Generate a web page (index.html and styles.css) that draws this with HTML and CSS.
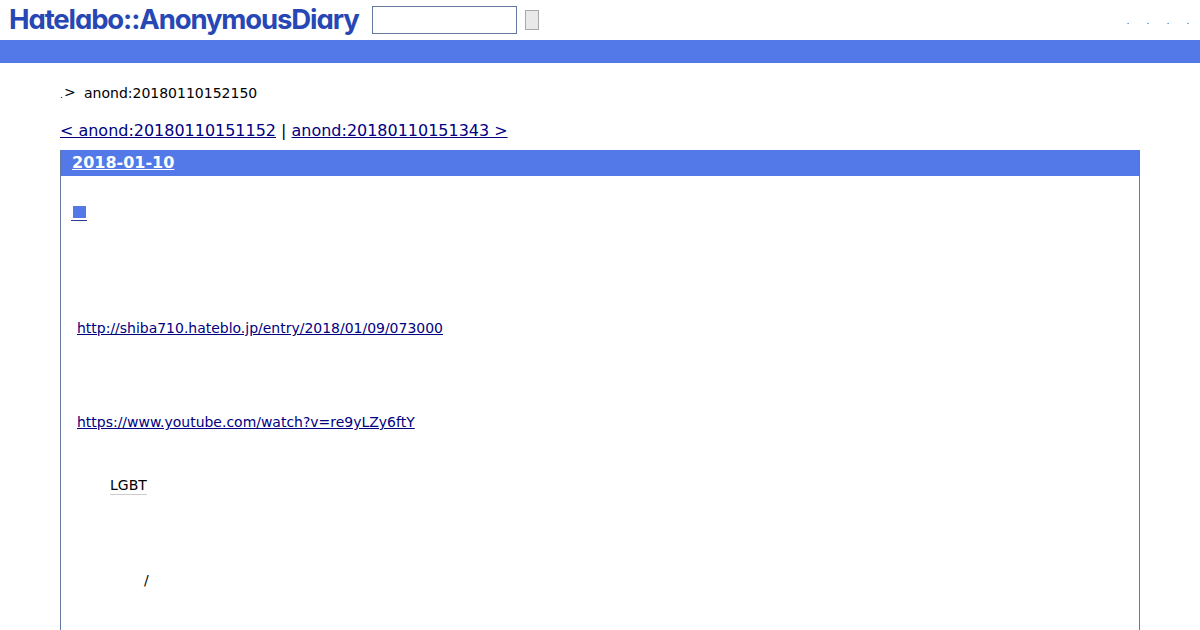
FILE: index.html
```html
<!DOCTYPE html>
<html lang="ja">
<head>
<meta charset="utf-8">
<title>anond:20180110152150</title>
<link rel="stylesheet" href="styles.css">
</head>
<body>
<header class="top">
  <a class="logo">Hatelabo::AnonymousDiary</a>
  <form class="search">
    <input class="search-input" type="text">
    <button class="search-btn" type="button"></button>
  </form>
  <nav class="top-links"><span>.</span><span>.</span><span>.</span><span>.</span></nav>
</header>
<div class="bar"></div>
<main class="main">
  <p class="crumb"><span class="dot">.</span><span class="gt">&gt;</span><span>anond:20180110152150</span></p>
  <p class="pager"><a href="#">&lt; anond:20180110151152</a> | <a href="#">anond:20180110151343 &gt;</a></p>
  <section class="day">
    <h2 class="day-title"><a href="#">2018-01-10</a></h2>
    <div class="body">
      <h3 class="section-head"><a href="#"><span class="square"></span></a></h3>
      <p class="link-a"><a href="#">http://shiba710.hateblo.jp/entry/2018/01/09/073000</a></p>
      <p class="link-b"><a href="#">https://www.youtube.com/watch?v=re9yLZy6ftY</a></p>
      <p class="lgbt"><span class="kw">LGBT</span></p>
      <p class="slash">/</p>
    </div>
  </section>
</main>
</body>
</html>
```
FILE: styles.css
```css
html, body { margin: 0; padding: 0; height: 630px; overflow: hidden; background: #fff; }
body { font-family: "DejaVu Sans", sans-serif; color: #000; font-size: 14px; }
a { color: #000080; }
.top { height: 40px; display: flex; align-items: flex-start; }
.logo {
  font-family: "Inter", sans-serif; font-weight: 650; font-size: 27.5px; line-height: 39px;
  font-feature-settings: "cv11" 1;
  color: #2748b4; margin-left: 9px; width: 349px; white-space: nowrap; letter-spacing: -1.12px;
}
.search { display: flex; align-items: center; margin: 6px 0 0 14px; }
.search-input {
  width: 145px; height: 28px; box-sizing: border-box; border: 1px solid #64799f;
  background: #fff; padding: 0; margin: 0; border-radius: 0;
}
.search-btn {
  width: 14px; height: 20px; box-sizing: border-box; margin: 0 0 0 8px; padding: 0;
  background: #e9e9e9; border: 1px solid #a9a9a9; border-radius: 0;
}
.top-links { margin-left: auto; margin-right: 10px; display: flex; gap: 16px; font-size: 8px; line-height: 10px; padding-top: 17px; color: #333; }
.top-links span { width: 4px; text-align: center; }
.bar { height: 23px; background: #5279e7; }
.main { padding: 0 60px; }
.crumb { margin: 21px 0 0; height: 18px; line-height: 18px; font-size: 14px; display: flex; }
.dot { font-size: 9px; width: 4px; line-height: 22px; }
.gt { width: 20px; font-size: 14px; line-height: 16px; }
.pager { margin: 19px 0 0; font-size: 15.98px; line-height: 20px; }
.day { margin-top: 9px; border: 1px solid #64799f; border-top: 0; height: 500px; }
.day-title { margin: 0; background: #5279e7; height: 26px; line-height: 26px; font-size: 16px; font-weight: 700; padding-left: 11px; }
.day-title a { color: #fff; }
.body { padding: 0; }
.section-head { margin: 26px 0 0 10px; height: 20px; line-height: 20px; font-size: 14px; font-weight: 400; }
.section-head a { display: inline-block; width: 16px; height: 19px; border-bottom: 1px solid #2a3f9a; box-sizing: border-box; }
.square { display: block; width: 13px; height: 12px; margin: 4px 0 0 2px; background: #5279e7; }
.link-a { margin: 96px 0 0 16px; line-height: 20px; font-size: 13.97px; }
.link-b { margin: 74px 0 0 16px; line-height: 20px; font-size: 13.97px; }
.lgbt { margin: 43px 0 0 49px; line-height: 20px; }
.kw { display: inline-block; height: 18px; border-bottom: 1px solid #ccc; line-height: 19px; }
.slash { margin: 75px 0 0 83px; line-height: 20px; }
```
